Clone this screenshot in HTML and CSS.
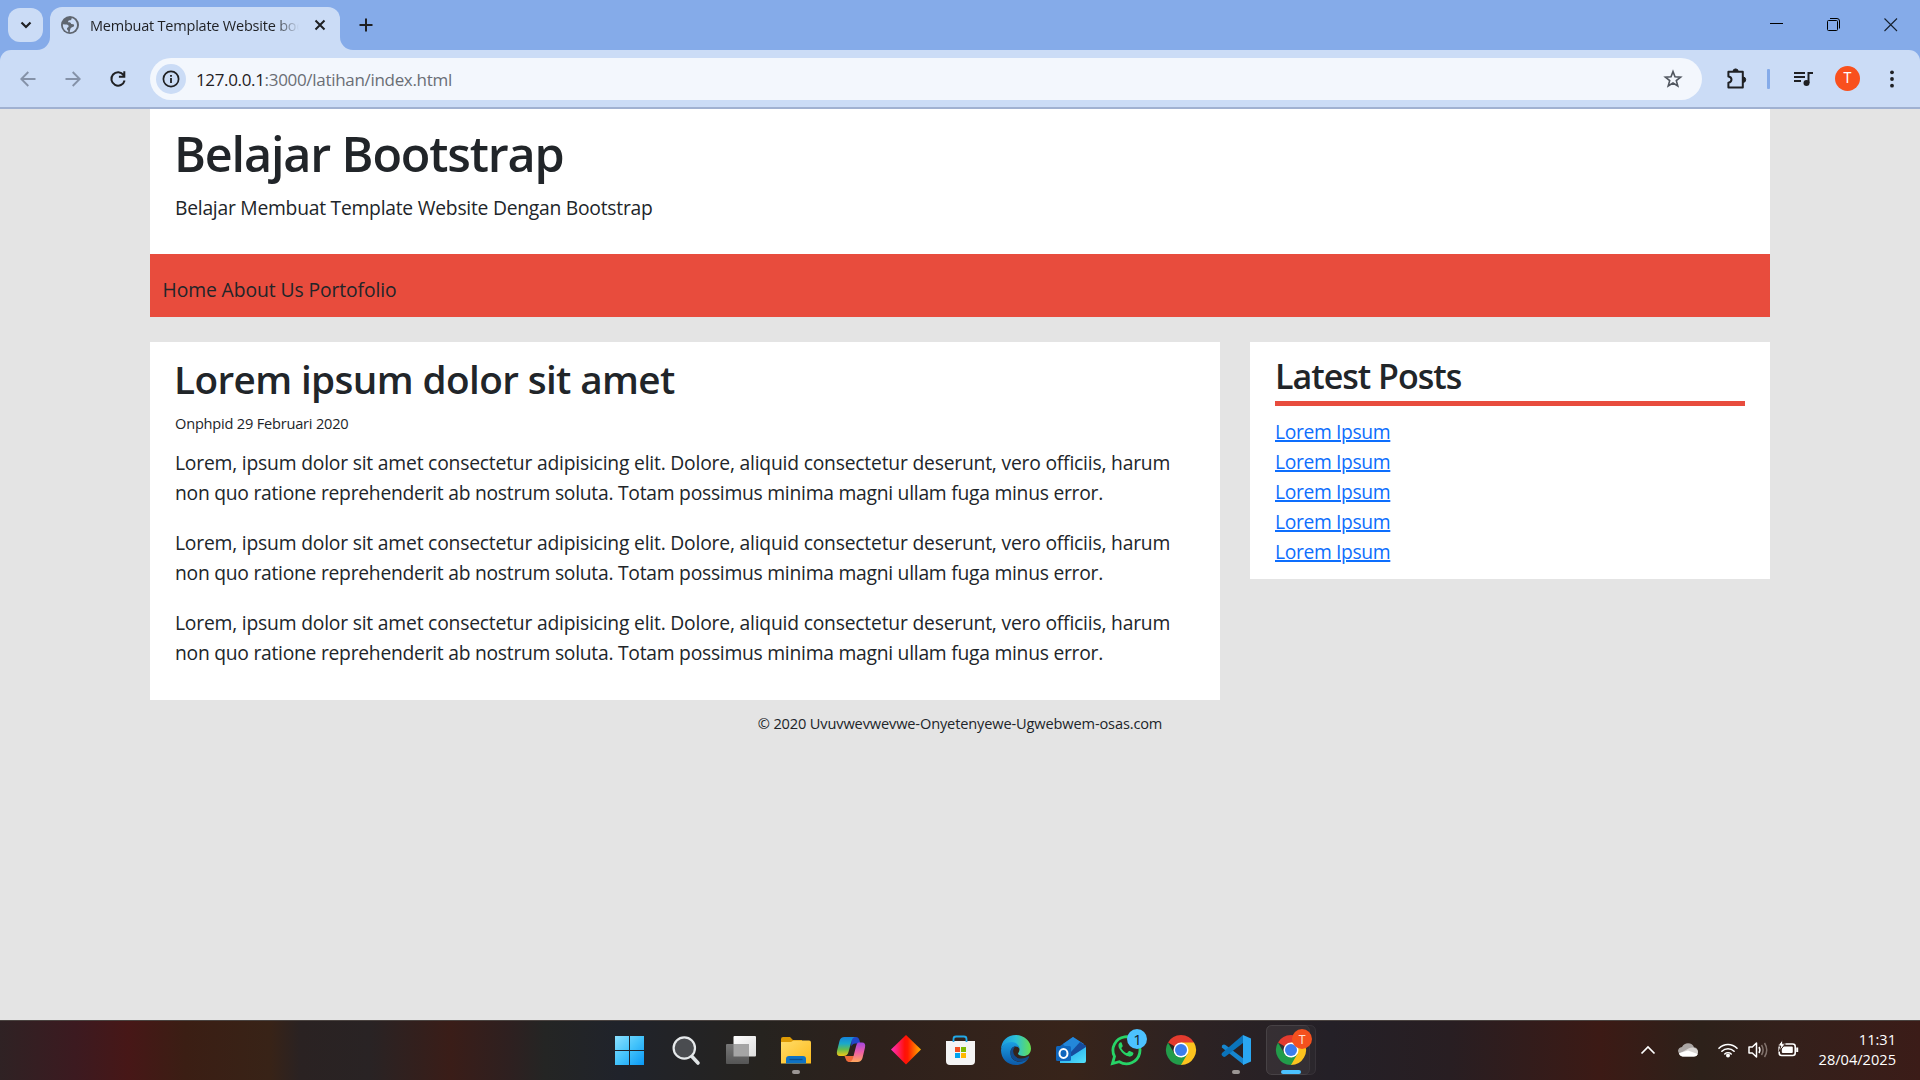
FILE: index.html
```html
<!DOCTYPE html>
<html lang="id">
<head>
<meta charset="utf-8">
<title>Membuat Template Website bootstrap</title>
<link rel="stylesheet" href="styles.css">
</head>
<body>
<div class="screen">
  <header class="tabstrip">
    <div class="tab-search"><svg width="12" height="8" viewBox="0 0 12 8"><path d="M1.5 1.5 6 6l4.5-4.5" fill="none" stroke="#1f2023" stroke-width="2.2"/></svg></div>
    <div class="tab">
      <svg class="tab-curve left" width="13" height="13" viewBox="0 0 13 13"><path d="M13 0v13H0A13 13 0 0 0 13 0z" fill="#cbdcf6"/></svg>
      <svg class="globe" width="18" height="18" viewBox="0 0 18 18"><circle cx="9" cy="9" r="9" fill="#5f6670"/><path d="M10.8 1.9c-.3 1.5-.7 2.3-2 2.4-1.400.1-1.700.8-1.700 1.900 1.900-.2 2.900.3 3.100 1.700 1.200.2 2.200-.1 2.700.9.600 1.300-.200 2-1.300 2.300-1.600.3-2.200 1.500-2.600 3.200l-.300 2c3.800.300 7.300-3 7.300-7.200 0-3.300-2-6.200-5.200-7.200zM1.900 8.200c-.3 3.800 2 7 5.300 7.800v-1.500c-1-.5-1.500-1.200-1.100-2.500 1-.6 1.800-1.200 1.500-2.200-.3-1-1.700-1.300-3-1.400z" fill="#cbdcf6"/></svg>
      <span class="tab-title">Membuat Template Website boo</span>
      <svg class="tab-close" width="12" height="12" viewBox="0 0 12 12"><path d="M1.500 1.500l9 9M10.500 1.500l-9 9" stroke="#1f2023" stroke-width="2"/></svg>
      <svg class="tab-curve right" width="13" height="13" viewBox="0 0 13 13"><path d="M0 0v13h13A13 13 0 0 1 0 0z" fill="#cbdcf6"/></svg>
    </div>
    <svg class="new-tab" width="14" height="14" viewBox="0 0 14 14"><path d="M7 .5v13M.5 7h13" stroke="#1f2023" stroke-width="2"/></svg>
    <div class="window-buttons">
      <svg width="14" height="14" viewBox="0 0 14 14"><path d="M0 5.500h13" stroke="#000"/></svg>
      <svg width="14" height="14" viewBox="0 0 14 14"><rect x=".5" y="2.500" width="10" height="10" rx="1" fill="none" stroke="#000"/><path d="M3 .5h7q2.500 0 2.500 2.500v7.500" fill="none" stroke="#000"/></svg>
      <svg width="14" height="14" viewBox="0 0 14 14"><path d="M.5.5l12.500 12.500M13 .5.5 13" stroke="#15202e" stroke-width="1.100"/></svg>
    </div>
  </header>

  <div class="toolbar">
    <svg class="nav-icon" width="16" height="16" viewBox="0 0 16 16"><path d="M15.500 8H1.500M8.300 1 1.300 8l7 7" fill="none" stroke="#8592a8" stroke-width="1.900"/></svg>
    <svg class="nav-icon" width="16" height="16" viewBox="0 0 16 16"><path d="M.5 8h14M7.700 1l7 7-7 7" fill="none" stroke="#8592a8" stroke-width="1.900"/></svg>
    <svg class="nav-icon" width="18" height="18" viewBox="0 0 18 18"><path d="M14.600 5.100A6.700 6.700 0 1 0 15.600 10.500M15.300 1.300v5.400H9.900" fill="none" stroke="#1f2023" stroke-width="2"/></svg>
    <div class="omnibox">
      <div class="site-info"><svg width="18" height="18" viewBox="0 0 18 18"><circle cx="9" cy="9" r="7.600" fill="none" stroke="#1f2023" stroke-width="1.700"/><path d="M9 8v5M9 4.900v1.800" stroke="#1f2023" stroke-width="1.800"/></svg></div>
      <div class="url"><span class="host">127.0.0.1</span><span class="path">:3000/latihan/index.html</span></div>
      <svg class="star" width="20" height="20" viewBox="0 0 20 20"><path d="M10 2.600l2 5.200 5.600.3-4.300 3.500 1.500 5.400-4.800-3-4.800 3 1.500-5.400-4.300-3.500 5.600-.3z" fill="none" stroke="#50565f" stroke-width="1.600"/></svg>
    </div>
    <svg class="extensions" width="22" height="22" viewBox="0 0 22 22"><path d="M2.400 3.700h14.400v15.800H2.400v-4.700c4.100-.6 4.100-5.800 0-6.400z" fill="none" stroke="#1f2023" stroke-width="2" stroke-linejoin="round"/><path d="M7 3.500a2.600 2.600 0 0 1 5.200 0zM17 9a2.700 2.700 0 0 1 0 5.400z" fill="#1f2023" stroke="#1f2023"/></svg>
    <span class="divider"></span>
    <svg class="media" width="20" height="16" viewBox="0 0 20 16"><path d="M1 2h11M1 6h11M1 10h7M15.500 12V2H20" fill="none" stroke="#1f2023" stroke-width="2"/><circle cx="13.500" cy="12" r="3" fill="#1f2023"/></svg>
    <span class="avatar">T</span>
    <svg class="menu" width="4" height="18" viewBox="0 0 4 18"><g fill="#1f2023"><circle cx="2" cy="2.300" r="1.900"/><circle cx="2" cy="9" r="1.900"/><circle cx="2" cy="15.700" r="1.900"/></g></svg>
  </div>

  <main class="page">
    <div class="container">
      <div class="site-header">
        <h1>Belajar Bootstrap</h1>
        <p>Belajar Membuat Template Website Dengan Bootstrap</p>
      </div>
      <nav class="site-nav">Home About Us Portofolio</nav>
      <div class="columns">
        <article class="post">
          <h2>Lorem ipsum dolor sit amet</h2>
          <small>Onphpid 29 Februari 2020</small>
          <p><span class="line">Lorem, ipsum dolor sit amet consectetur adipisicing elit. Dolore, aliquid consectetur deserunt, vero officiis, harum</span> <span class="line tight">non quo ratione reprehenderit ab nostrum soluta. Totam possimus minima magni ullam fuga minus error.</span></p>
          <p><span class="line">Lorem, ipsum dolor sit amet consectetur adipisicing elit. Dolore, aliquid consectetur deserunt, vero officiis, harum</span> <span class="line tight">non quo ratione reprehenderit ab nostrum soluta. Totam possimus minima magni ullam fuga minus error.</span></p>
          <p><span class="line">Lorem, ipsum dolor sit amet consectetur adipisicing elit. Dolore, aliquid consectetur deserunt, vero officiis, harum</span> <span class="line tight">non quo ratione reprehenderit ab nostrum soluta. Totam possimus minima magni ullam fuga minus error.</span></p>
        </article>
        <aside class="latest">
          <h3>Latest Posts</h3>
          <ul>
            <li><a href="#">Lorem Ipsum</a></li>
            <li><a href="#">Lorem Ipsum</a></li>
            <li><a href="#">Lorem Ipsum</a></li>
            <li><a href="#">Lorem Ipsum</a></li>
            <li><a href="#">Lorem Ipsum</a></li>
          </ul>
        </aside>
      </div>
      <footer class="site-footer">© 2020 Uvuvwevwevwe-Onyetenyewe-Ugwebwem-osas.com</footer>
    </div>
  </main>

  <div class="taskbar">
    <svg width="0" height="0" class="defs">
      <defs>
        <linearGradient id="win" gradientUnits="userSpaceOnUse" x1="12" y1="16" x2="41" y2="45"><stop offset="0" stop-color="#8be0ff"/><stop offset=".5" stop-color="#43c3fb"/><stop offset="1" stop-color="#0a98f5"/></linearGradient>
        <linearGradient id="tv1" x1="0" y1="0" x2="1" y2="1"><stop offset="0" stop-color="#fff"/><stop offset="1" stop-color="#dcdcdc"/></linearGradient>
        <linearGradient id="tv2" x1="0" y1="0" x2="0" y2="1"><stop offset="0" stop-color="#777"/><stop offset="1" stop-color="#555"/></linearGradient>
        <linearGradient id="fold" x1="0" y1="0" x2="1" y2="1"><stop offset="0" stop-color="#ffdc69"/><stop offset="1" stop-color="#fdbb1c"/></linearGradient>
        <linearGradient id="cp1" x1="0" y1="0" x2="0" y2="1"><stop offset="0" stop-color="#1583dc"/><stop offset=".35" stop-color="#1ba9c9"/><stop offset=".65" stop-color="#63bb4f"/><stop offset="1" stop-color="#f4c716"/></linearGradient>
        <linearGradient id="cp2" x1="0" y1="0" x2="0" y2="1"><stop offset="0" stop-color="#a346e0"/><stop offset=".5" stop-color="#ef5fa6"/><stop offset="1" stop-color="#ffa85c"/></linearGradient>
        <linearGradient id="dia"><stop offset="0" stop-color="#ff2fc2"/><stop offset=".46" stop-color="#ff1008"/><stop offset=".56" stop-color="#ff1a00"/><stop offset="1" stop-color="#ffb400"/></linearGradient>
        <linearGradient id="edge1"><stop offset="0" stop-color="#1b9ae0"/><stop offset=".5" stop-color="#2cc1d8"/><stop offset="1" stop-color="#66e04f"/></linearGradient>
        <linearGradient id="edge2" x1="0" y1="0" x2="0" y2="1"><stop offset="0" stop-color="#1b9fe3"/><stop offset="1" stop-color="#0c59a8"/></linearGradient>
        <linearGradient id="out" x1="0" y1="0" x2="1" y2="1"><stop offset="0" stop-color="#1a9de8"/><stop offset="1" stop-color="#53e1fb"/></linearGradient>
        <g id="chrome">
          <path d="M27.500 30 14.500 22.500A15 15 0 0 1 40.500 22.500z" fill="#e33b2e"/>
          <path d="M27.500 30V22.500H40.500A15 15 0 0 1 27.500 45z" fill="#fcc31e"/>
          <path d="M14.500 22.500 21 33.750 27.500 37.500 34 33.750 27.500 45A15 15 0 0 1 14.500 22.500z" fill="#229c4a"/>
          <circle cx="27.500" cy="30" r="7.500" fill="#fff"/><circle cx="27.500" cy="30" r="6" fill="#3b7ded"/>
        </g>
      </defs>
    </svg>
    <div class="apps">
      <svg class="app" viewBox="0 0 55 60"><path d="M12 16h14v14H12zM27 16h14v14H27zM12 31h14v14H12zM27 31h14v14H27z" fill="url(#win)"/></svg>
      <svg class="app" viewBox="0 0 55 60"><path d="M34 36.500l6 6.500" stroke="#dfe3e5" stroke-width="3.600" stroke-linecap="round"/><circle cx="26.300" cy="28" r="10.700" fill="#4a4c50" stroke="#e6e9eb" stroke-width="2.200"/></svg>
      <svg class="app" viewBox="0 0 55 60"><rect x="20.500" y="16" width="22.500" height="20.500" rx="1" fill="url(#tv1)"/><rect x="13" y="24" width="23" height="20" rx="1" fill="url(#tv2)"/><path d="M20.500 24H36v12.500H20.500z" fill="#a5a5a5"/></svg>
      <svg class="app" viewBox="0 0 55 60"><path d="M13 19q0-2 2-2h7l3 3h9v8H13z" fill="#dd9a05"/><path d="M13 22h10l2.500-1.500H41q2 0 2 2V43.500H13z" fill="url(#fold)"/><path d="M18 43.500V39q0-3 3-3h14q3 0 3 3v4.500z" fill="#0f72c4"/><path d="M21.500 39.500h13" stroke="#0a4f91" stroke-width="1.300"/><rect x="24" y="50" width="8" height="4" rx="2" fill="#9b9694"/></svg>
      <svg class="app" viewBox="0 0 55 60"><g transform="translate(1 0)"><path d="M27 17h5q2.500 0 3.400 3l1 3.500h-5q-3 0-4 3z" fill="#2247c8"/><path d="M20.500 36h10l-1.500 5q-.8 1-3 1h-1.500q-2 0-2.800-3z" fill="#ee6a3a"/><path d="M20.500 17H31q-2.500.5-3.500 4l-3 11q-1 4-5 4h-3.500q-4 0-3-5l2.500-10q1-4 5-4z" fill="url(#cp1)"/><path d="M34.500 22.500H38q4 0 3 5l-2.500 10.500q-1.200 4-5 4H25.500q2.500-.5 3.500-4l3-11.500q1-4 2.500-4z" fill="url(#cp2)"/></g></svg>
      <svg class="app" viewBox="0 0 55 60"><path d="M28 15 43 29.500 28 44.500 13 29.500z" fill="url(#dia)"/></svg>
      <svg class="app" viewBox="0 0 55 60"><path d="M20.500 25v-6q0-2.500 2.500-2.500h8q2.500 0 2.500 2.500v6" fill="none" stroke="#22a9e8" stroke-width="1.800"/><path d="M13 21h29v20q0 4-4 4H17q-4 0-4-4z" fill="#f4f4f4"/><path d="M22 27h5v5h-5z" fill="#f25022"/><path d="M28 27h5v5h-5z" fill="#7fba00"/><path d="M22 33h5v5h-5z" fill="#00a4ef"/><path d="M28 33h5v5h-5z" fill="#ffb900"/><path d="M20.500 21v1M33.500 21v1" stroke="#22a9e8" stroke-width="1.800"/></svg>
      <svg class="app" viewBox="0 0 55 60"><path d="M13 30C13 20.500 19.500 15 28 15s15 6.500 15 13.500c0 5-3.500 7.500-7.500 7.500-3 0-5.500-1-5.500-2.400 0-.9 1.500-1.500 1.500-4.100C31.500 26 28 23 23.500 23 17.500 23 13.800 26 13 30z" fill="url(#edge1)"/><path d="M13 30c1-5 5-8 10.500-8 4.500 0 8 3 8 7.500-.5-2-2-3-4-3-3 0-5 2.500-5 6.500 0 6.500 5.500 9.500 10.500 8.500 3-.6 5.200-1.800 7.500-3.500-2.500 4.500-7 7-12.500 7C19 45 13 38.500 13 30z" fill="url(#edge2)"/><path d="M22.500 33c0-4 2-6.500 5-6.500-5 4-1.500 12.500 6 12 3-.2 5-1.200 7-2.500q1 .5.500 1.500c-2 2.500-4.500 4-8 4.200-5.500.3-10.500-3-10.500-8.700z" fill="#114a8b"/></svg>
      <svg class="app" viewBox="0 0 55 60"><path d="M17 26 30 17 43 26V38L17 33z" fill="#1267bd"/><path d="M20 24 30 17l11 7-13 9z" fill="#2387da"/><path d="M27 33 37 22l6 4v3L28 38z" fill="#164c9e"/><path d="M17 43V39L29 36 43 27V41q0 2-2 2z" fill="url(#out)"/><rect x="13" y="26" width="15" height="15" rx="1.500" fill="#0f66bd"/><ellipse cx="20.500" cy="33.500" rx="4" ry="4.400" fill="none" stroke="#fff" stroke-width="2"/></svg>
      <svg class="app" viewBox="0 0 55 60"><path d="M14.500 43.500l2-7A13.500 13.500 0 1 1 21.300 41.700z" fill="none" stroke="#27d467" stroke-width="2.800"/><path d="M23.600 22.800c-.5-.8-1.500-.6-2.200.1-1.500 1.600-1.200 4 .5 6.600 2.400 3.800 5.600 6.500 9.300 7.100 2 .2 4-.8 4.200-3 0-.7-.2-.9-.9-1.300l-2.700-1.300c-.6-.2-.9-.1-1.300.4l-1.100 1.400c-.4.400-.8.400-1.300.1-2.100-1-3.500-2.500-4.600-4.300-.2-.5-.1-.8.200-1.100.900-.9 1.200-1.300.9-2.100z" fill="#27d467"/><circle cx="39" cy="19" r="10" fill="#4cc2ff"/><text x="39.500" y="24.500" class="badge-count">1</text></svg>
      <svg class="app" viewBox="0 0 55 60"><use href="#chrome" x=".5"/></svg>
      <svg class="app" viewBox="0 0 55 60"><path d="M14 25.500q1.800-1.800 3.500-.5L36 39v6L13.800 27.500z" fill="#1686cf"/><path d="M14 35.500q-1-1.500 0-2.500L35 15v8L17.500 36.500q-1.800 1.300-3.500-1z" fill="#0b74bb"/><path d="M35 15l8 3.500v23L35 45z" fill="#2aa7f2"/><rect x="24" y="50" width="8" height="4" rx="2" fill="#9b9694"/></svg>
      <svg class="app" viewBox="0 0 55 60"><rect x="3.500" y="5.500" width="49" height="49" rx="5" fill="#fff" fill-opacity=".03" stroke="#fff" stroke-opacity=".07"/><rect x="3.500" y="5.500" width="43" height="49" rx="5" fill="#fff" fill-opacity=".04" stroke="#fff" stroke-opacity=".06"/><use href="#chrome" x=".5"/><circle cx="39" cy="19" r="10" fill="#f4511e"/><text x="39" y="23.500" class="badge-letter">T</text><rect x="18" y="50" width="20" height="4" rx="2" fill="#4cc2ff"/></svg>
    </div>
    <div class="tray">
      <svg width="16" height="10" viewBox="0 0 16 10"><path d="M1.500 8.500 8 2l6.500 6.500" fill="none" stroke="#fff" stroke-width="1.700"/></svg>
      <svg class="cloud" width="20" height="14" viewBox="0 0 20 14"><path d="M3 11.500Q0 10 0 8q.3-3.500 4-4Q6 .3 10 .3q4.500 0 6 4Q20 5 20 9z" fill="#aaa5a3"/><path d="M5 13.500Q1 13 1.500 10.500L11 5.300q2-1 4-.8Q20 5.500 20 9.500q-.5 4-4 4z" fill="#d8d5d3"/><path d="M4.500 13.500Q1.500 13 .8 10.200L10 7.500l9.800 3.500q-1 2.500-4 2.500z" fill="#fff"/></svg>
      <svg class="wifi" width="20" height="16" viewBox="0 0 20 16"><path d="M1 6.300a12.700 12.700 0 0 1 18 0M3.900 9.200a8.700 8.700 0 0 1 12.200 0M6.800 12a4.700 4.700 0 0 1 6.400 0" fill="none" stroke="#fff" stroke-width="1.600" stroke-linecap="round"/><circle cx="10" cy="13.600" r="2" fill="#fff"/></svg>
      <svg class="sound" width="21" height="18" viewBox="0 0 21 18"><path d="M1 6h3.300L8.500 2v14l-4.200-4H1z" fill="none" stroke="#fff" stroke-width="1.500" stroke-linejoin="round"/><path d="M11 6q1.800 3 0 6" fill="none" stroke="#fff" stroke-width="1.500"/><path d="M13.500 4q3.200 5 0 10M16.500 2q4.500 7 0 14" fill="none" stroke="#82736d" stroke-width="1.500"/></svg>
      <svg class="battery" width="21" height="18" viewBox="0 0 21 18"><rect x="1.200" y="5" width="16" height="11.500" rx="2.500" fill="none" stroke="#fff" stroke-width="1.600"/><rect x="3.800" y="7.500" width="11" height="6.500" rx="1" fill="#fff"/><path d="M19.200 8.500v4.500" stroke="#fff" stroke-width="2"/><path d="M4.700.4-.2 7h3l-1.600 5.500 6.200-7.700H4.700z" fill="#fff" stroke="#321d17"/></svg>
      <div class="clock"><span class="time">11:31</span><span class="date">28/04/2025</span></div>
    </div>
  </div>
</div>
</body>
</html>
```
FILE: styles.css
```css
* { box-sizing: border-box; }
body { margin: 0; font-family: "Open Sans", "Noto Sans", sans-serif; color: #212529; }
h1, h2, h3, p, ul { margin: 0; padding: 0; }
svg { display: block; flex: none; }
.screen { width: 1920px; height: 1080px; display: flex; flex-direction: column; overflow: hidden; background: #85abe9; }

/* Tab strip */
.tabstrip { height: 50px; flex: none; display: flex; align-items: center; padding-left: 8px; }
.tab-search { width: 35px; height: 34px; border-radius: 12px; background: #cbdcf6; display: flex; align-items: center; justify-content: center; }
.tab { position: relative; width: 290px; height: 43px; margin: 7px 0 0 7px; padding: 0 14px 7px 11px; border-radius: 12px 12px 0 0; background: #cbdcf6; display: flex; align-items: center; }
.tab-curve { position: absolute; bottom: 0; }
.tab-curve.left { left: -13px; }
.tab-curve.right { right: -13px; }
.tab-title { width: 209px; margin-left: 11px; padding-top: 1px; font-size: 14.5px; line-height: 20px; letter-spacing: -0.22px; color: #1f2023; white-space: nowrap; overflow: hidden; -webkit-mask-image: linear-gradient(90deg, #000 184px, transparent 209px); mask-image: linear-gradient(90deg, #000 184px, transparent 209px); }
.tab-close { margin-left: 15px; }
.new-tab { margin-left: 18.500px; }
.window-buttons { margin-left: auto; padding-right: 22px; display: flex; gap: 43px; }

/* Toolbar */
.toolbar { height: 59px; flex: none; display: flex; align-items: center; padding: 0 26px 0 20px; background: #cbdcf6; border-bottom: 2px solid #a0b1d1; border-radius: 11px 11px 0 0; }
.nav-icon { margin-right: 29px; }
.nav-icon + .nav-icon { margin-right: 28px; }
.nav-icon + .nav-icon + .nav-icon { margin-right: 23px; }
.omnibox { width: 1552px; height: 42px; margin-top: 1px; border-radius: 21px; background: #f3f7fd; display: flex; align-items: center; padding: 0 19.500px 0 6px; }
.site-info { width: 30px; height: 30px; border-radius: 50%; background: #cbdcf6; display: flex; align-items: center; justify-content: center; }
.url { flex: 1; margin-left: 10px; padding-top: 1px; font-size: 17px; line-height: 24px; color: #6a6e75; white-space: nowrap; }
.host { color: #1f2023; letter-spacing: -0.35px; }
.path { letter-spacing: -0.31px; }
.extensions { margin-left: 24px; }
.divider { width: 3px; height: 20px; margin-left: 19px; border-radius: 1px; background: #85abe9; }
.media { margin-left: 23px; }
.avatar { width: 25px; height: 25px; margin-left: 22px; border-radius: 50%; background: #f9501d; color: #fff; font: 14px/25px Roboto, sans-serif; text-align: center; }
.menu { margin-left: auto; }

/* Web page */
.page { height: 911px; flex: none; padding: 0 150px; background: #e4e4e4; font-size: 19.3px; line-height: 30px; }
.site-header { height: 145px; padding: 14px 25px 0; background: #fff; letter-spacing: -0.25px; }
h1 { margin: 0 0 10px -1px; font-size: 48.5px; line-height: 60px; font-weight: 600; letter-spacing: -1.15px; }
.site-nav { height: 63px; padding: 21px 12.500px 0; background: #e84c3d; letter-spacing: -0.08px; }
.columns { display: flex; align-items: flex-start; justify-content: space-between; margin-top: 25px; }
.post { width: 1070px; height: 358px; padding: 13px 25px 0; background: #fff; white-space: nowrap; }
h2 { margin-left: -1px; font-size: 38.7px; line-height: 48px; font-weight: 600; letter-spacing: -0.61px; }
small { display: block; margin: 9px 0 14px; font-size: 14.6px; line-height: 22px; letter-spacing: -0.21px; }
.post p { margin-bottom: 20px; }
.line { display: block; letter-spacing: -0.2px; }
.line.tight { letter-spacing: -0.26px; }
.latest { width: 520px; height: 237px; padding: 13px 25px 0; background: #fff; }
h3 { height: 51px; margin-bottom: 11px; border-bottom: 5px solid #e84c3d; font-size: 34px; line-height: 42px; font-weight: 600; letter-spacing: -1px; }
ul { list-style: none; }
li { height: 30px; }
a { color: #0d6efd; letter-spacing: -0.36px; text-decoration: underline; text-decoration-thickness: 2px; }
.site-footer { margin-top: 12px; font-size: 14.6px; line-height: 22px; letter-spacing: -0.144px; text-align: center; }

/* Taskbar */
.taskbar { height: 60px; flex: none; display: flex; justify-content: space-between; padding: 0 24px 0 603px; border-top: 1px solid #4a4340; color: #fff; background: linear-gradient(90deg, #2f2224 0, #3c1a20 75px, #471717 128px, #3b1e14 185px, #382317 270px, #2a2222 300px, #292324 370px, #3a1d18 450px, #2e2020 510px, #242524 545px, #20232b 620px, #26231f 760px, #2e211c 880px, #38241a 1070px, #2c2223 1200px, #242027 1330px, #281e22 1450px, #3c1a15 1600px, #2d211a 1700px, #34201b 1790px, #3b1c18 1920px); }
.defs { position: absolute; }
.apps { display: flex; margin-top: -1px; }
.app { width: 55px; height: 60px; }
.badge-count { font: 15px "Open Sans", sans-serif; fill: #10202c; text-anchor: middle; }
.badge-letter { font: 12px Roboto, sans-serif; fill: #ffe1d5; text-anchor: middle; }
.tray { display: flex; align-items: center; padding-bottom: 2px; }
.cloud { margin-left: 22px; }
.wifi { margin-left: 20px; }
.sound { margin-left: 10px; }
.battery { margin: -3px 0 0 9px; }
.clock { width: 97px; margin-top: -2px; display: flex; flex-direction: column; align-items: flex-end; font-size: 14.6px; line-height: 20px; }
```
